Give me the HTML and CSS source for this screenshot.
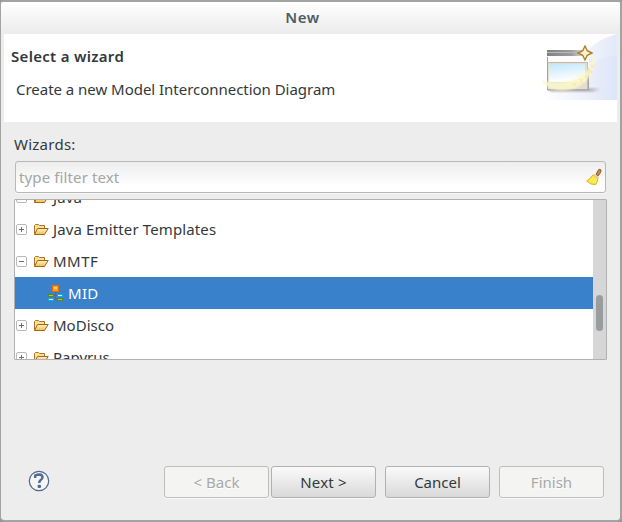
FILE: index.html
```html
<!DOCTYPE html>
<html lang="en">
<head>
<meta charset="utf-8">
<title>New</title>
<link rel="stylesheet" href="styles.css">
</head>
<body>
<svg class="defs" aria-hidden="true">
  <defs>
    <linearGradient id="fold" x1="0" y1="0" x2="0" y2="1"><stop offset="0" stop-color="#fff3c4"/><stop offset="1" stop-color="#f2bb58"/></linearGradient>
    <symbol id="folder" viewBox="0 0 16 13">
      <path d="M1.500 11V2.500L2.500 1.500H5.500L6.500 2.500H11.500V5.500" fill="#fbe09a" stroke="#b57423"/>
      <path d="M1.500 11.500L4.500 5.500H15.200L11.500 11.500Z" fill="url(#fold)" stroke="#a8641c" stroke-linejoin="round"/>
    </symbol>
    <symbol id="plus" viewBox="0 0 11 11"><rect x=".5" y=".5" width="10" height="10" rx="1.500" fill="#fff" stroke="#b9bab8"/><path d="M3 5.500H8M5.500 3V8" stroke="#6c7071"/></symbol>
    <symbol id="minus" viewBox="0 0 11 11"><rect x=".5" y=".5" width="10" height="10" rx="1.500" fill="#fff" stroke="#b9bab8"/><path d="M3 5.500H8" stroke="#6c7071"/></symbol>
  </defs>
</svg>
<div class="window">
  <div class="titlebar"><span>New</span></div>
  <header class="banner">
    <div class="banner-text">
      <h1><span>Select a wizard</span></h1>
      <p><span>Create a new Model Interconnection Diagram</span></p>
    </div>
    <svg class="banner-art" width="75" height="66" viewBox="0 0 75 66">
      <defs>
        <linearGradient id="bg" x1="0" y1="0" x2="1" y2="0"><stop offset="0" stop-color="#fff"/><stop offset=".55" stop-color="#edf1fa"/><stop offset="1" stop-color="#e3e9f8"/></linearGradient>
        <linearGradient id="low" x1="0" y1="0" x2="1" y2="0"><stop offset="0" stop-color="#fff"/><stop offset=".5" stop-color="#eef1fa"/><stop offset="1" stop-color="#dce4f7"/></linearGradient>
        <linearGradient id="bar" x1="0" y1="0" x2="1" y2="0"><stop offset="0" stop-color="#7f7f7f"/><stop offset=".65" stop-color="#9d9d9d"/><stop offset="1" stop-color="#e4e1d7"/></linearGradient>
        <linearGradient id="sky" x1="0" y1="0" x2=".25" y2="1"><stop offset="0" stop-color="#c3e7fa"/><stop offset="1" stop-color="#fff"/></linearGradient>
        <filter id="soft" x="-20%" y="-100%" width="140%" height="300%"><feGaussianBlur stdDeviation="1.400"/></filter>
        <filter id="glow" x="-20%" y="-20%" width="140%" height="140%"><feGaussianBlur stdDeviation=".8"/></filter>
      </defs>
      <path d="M24 66C29 31 44 8 75 0V66Z" fill="url(#bg)"/>
      <path d="M0 66C24 50 43 25 75 21V66Z" fill="url(#low)" opacity=".85"/>
      <g transform="translate(2 0)">
        <path d="M5 55H56L47 57H6Z" fill="#8d8796" filter="url(#soft)"/>
        <rect x="3" y="16" width="42" height="40" fill="#fcfcfc"/>
        <rect x="3" y="16" width="38" height="6" fill="url(#bar)"/>
        <path d="M3 18.500H38" stroke="#b8b8b8"/>
        <rect x="3.500" y="28.500" width="40" height="27" fill="#e3ddd1" stroke="#bcbcb4"/>
        <rect x="5" y="30" width="36" height="18" fill="url(#sky)"/>
        <path d="M3.500 23V56H44.500V34" fill="none" stroke="#a3a29d"/>
        <path d="M1 49C15 61 47 56 50 24C47 43 26 53 1 49Z" fill="#fbf7c9" stroke="#fbf7c9" stroke-width="3" opacity=".9" filter="url(#glow)"/>
        <g fill="none" stroke="#f6e49c" stroke-width="1"><path d="M45 25l3 3m0-3l-3 3M47 31l3 3m0-3l-3 3M45 36l3 3m0-3l-3 3M41 41l3 3m0-3l-3 3M36 45l3 3m0-3l-3 3M29 49l3 3m0-3l-3 3"/></g>
      </g>
      <path d="M43 12L45.300 16.700L50 19L45.300 21.300L43 26L40.700 21.300L36 19L40.700 16.700Z" fill="#fff3cf" stroke="#a97d2c" stroke-width="1.400"/>
    </svg>
  </header>
  <main>
    <div class="label"><span>Wizards:</span></div>
    <div class="filter"><span>type filter text</span>
      <svg width="16" height="18" viewBox="0 0 16 18">
        <path d="M10 6.500L12.500 1.800Q14 .8 14.800 1.800Q15.200 3 14.500 4.500L12 8Z" fill="#c98d3e" stroke="#8b5520"/>
        <path d="M6.800 7Q5 10 .7 13L5 16L9.800 16.500Q12 13 12 9.500Z" fill="#f7e541" stroke="#d5b91e"/>
        <path d="M7.500 6.500L12.500 9.500" stroke="#e1c9bd" stroke-width="2"/><path d="M7 10L4 14M9 11L6.500 15M10.500 11L9 15" stroke="#fff898" stroke-width=".8"/>
      </svg>
    </div>
    <div class="tree">
      <div class="rows">
        <div class="row"><svg class="exp"><use href="#plus"/></svg><svg class="fold"><use href="#folder"/></svg><span class="t-java">Java</span></div>
        <div class="row"><svg class="exp"><use href="#plus"/></svg><svg class="fold"><use href="#folder"/></svg><span class="t-jet">Java Emitter Templates</span></div>
        <div class="row"><svg class="exp"><use href="#minus"/></svg><svg class="fold"><use href="#folder"/></svg><span class="t-mmtf">MMTF</span></div>
        <div class="row selected">
          <svg class="mid" width="16" height="16" viewBox="0 0 16 16">
            <path d="M7.500 7V15M5.500 10.500H10.500M5.500 14.500H10.500" stroke="#74645d" fill="none"/>
            <rect x="4.500" y=".5" width="6" height="6" fill="#ff9d20" stroke="#df6b13"/><rect x="6" y="2" width="3" height="2" fill="#ffd15c"/>
            <path d="M0 9h6v3H0zM9 13h6v3H9z" fill="#578b22"/><path d="M1 10h4v1H1zM10 14h4v1h-4z" fill="#a7cc42"/>
            <path d="M0 13h6v3H0zM9 9h6v3H9z" fill="#14a7e9"/><path d="M1 14h4v1H1zM10 10h4v1h-4z" fill="#c9f6ff"/>
          </svg><span class="t-mid">MID</span></div>
        <div class="row"><svg class="exp"><use href="#plus"/></svg><svg class="fold"><use href="#folder"/></svg><span class="t-mod">MoDisco</span></div>
        <div class="row"><svg class="exp"><use href="#plus"/></svg><svg class="fold"><use href="#folder"/></svg><span class="t-pap">Papyrus</span></div>
      </div>
      <div class="track"><div class="thumb"></div></div>
    </div>
  </main>
  <footer>
    <svg class="help" width="22" height="22" viewBox="0 0 22 22"><circle cx="11" cy="11" r="9.700" fill="#f4f5f7" stroke="#526788" stroke-width="1.200"/><path d="M7.200 8V5.500Q9 4.500 11.500 4.500Q14.500 4.700 14.500 7.300Q14.500 9 12.500 10.200Q11.200 11.200 11.200 13" fill="none" stroke="#566b91" stroke-width="2.500"/><rect x="9.600" y="14.700" width="3.400" height="3.200" rx="1" fill="#566b91"/></svg>
    <div class="button off back"><span>&lt; Back</span></div>
    <div class="button next"><span>Next &gt;</span></div>
    <div class="button cancel"><span>Cancel</span></div>
    <div class="button off finish"><span>Finish</span></div>
  </footer>
</div>
</body>
</html>
```
FILE: styles.css
```css
* { box-sizing: border-box; }
body { margin: 0; background: #939393; color: #33393b; font: 15px/20px "Noto Sans", "Open Sans", sans-serif; overflow: hidden; }
.defs { position: absolute; width: 0; height: 0; }
svg { display: block; flex: none; }
span { white-space: nowrap; }
.window { width: 622px; height: 522px; border: solid #a3a3a3; border-width: 2px 2px 2px 1px; border-radius: 3px 3px 5px 5px; background: #ededed; display: flex; flex-direction: column; }
.titlebar { height: 32px; border-radius: 3px 3px 0 0; background: linear-gradient(#fff, #ebebeb); text-align: center; line-height: 31px; font-weight: 600; color: #4c5d65; text-indent: -16px; letter-spacing: .5px; }
.banner { height: 88px; margin: 0 3px; background: #fff; display: flex; justify-content: space-between; }
.banner-text { padding: 12px 0 0 7px; }
h1 { font: inherit; font-weight: 600; letter-spacing: .3px; margin: 0; }
p { margin: 13px 0 0 5px; letter-spacing: -.03px; }
.banner-art { width: 75px; height: 66px; }
main { padding: 12px 13px 0 13px; }
.label { height: 27px; letter-spacing: .25px; }
.filter { height: 32px; margin: 0 1px; border: 1px solid #b8b8b8; border-radius: 3px; background: linear-gradient(#ededed, #fff 80%); display: flex; align-items: center; justify-content: space-between; padding: 0 3px; color: #a4a6a5; box-shadow: 0 1px #f7f7f7; letter-spacing: .12px; }
.tree { margin-top: 6px; height: 161px; border: 1px solid #b1b1b1; border-radius: 1px; background: #fff; display: flex; overflow: hidden; }
.rows { flex: 1; margin-top: -19px; }
.row { height: 32px; display: flex; align-items: center; padding-left: 1px; }
.exp { width: 11px; height: 11px; }
.fold { width: 16px; height: 13px; margin: 0 4px 0 6px; }
.t-jet, .t-java { letter-spacing: .13px; }
.t-mmtf { letter-spacing: .5px; }
.t-mid { letter-spacing: .3px; }
.row.selected { background: #3a81cc; color: #fff; padding-left: 33px; }
.mid { margin-right: 4px; }
.track { width: 13px; background: #d6d6d6; padding: 95px 3px 0; }
.thumb { height: 36px; width: 7px; border-radius: 4px; background: #9b9c9e; }
footer { margin-top: 106px; display: flex; align-items: center; padding-left: 27px; }
.help { margin-top: -2px; }
.button { width: 105px; height: 32px; border: 1px solid #b0b2b1; border-radius: 3px; background: linear-gradient(#fafafa, #d9d9d9); box-shadow: 0 1px #f8f8f8; text-align: center; line-height: 31px; }
.button.off { background: #f4f4f2; color: #a6a9a7; text-shadow: 0 1px #fff; border-color: #bdbfbb; }
.back { margin-left: 114px; }
.next { margin-left: 2px; letter-spacing: .2px; }
.cancel, .finish { margin-left: 9px; }
```
